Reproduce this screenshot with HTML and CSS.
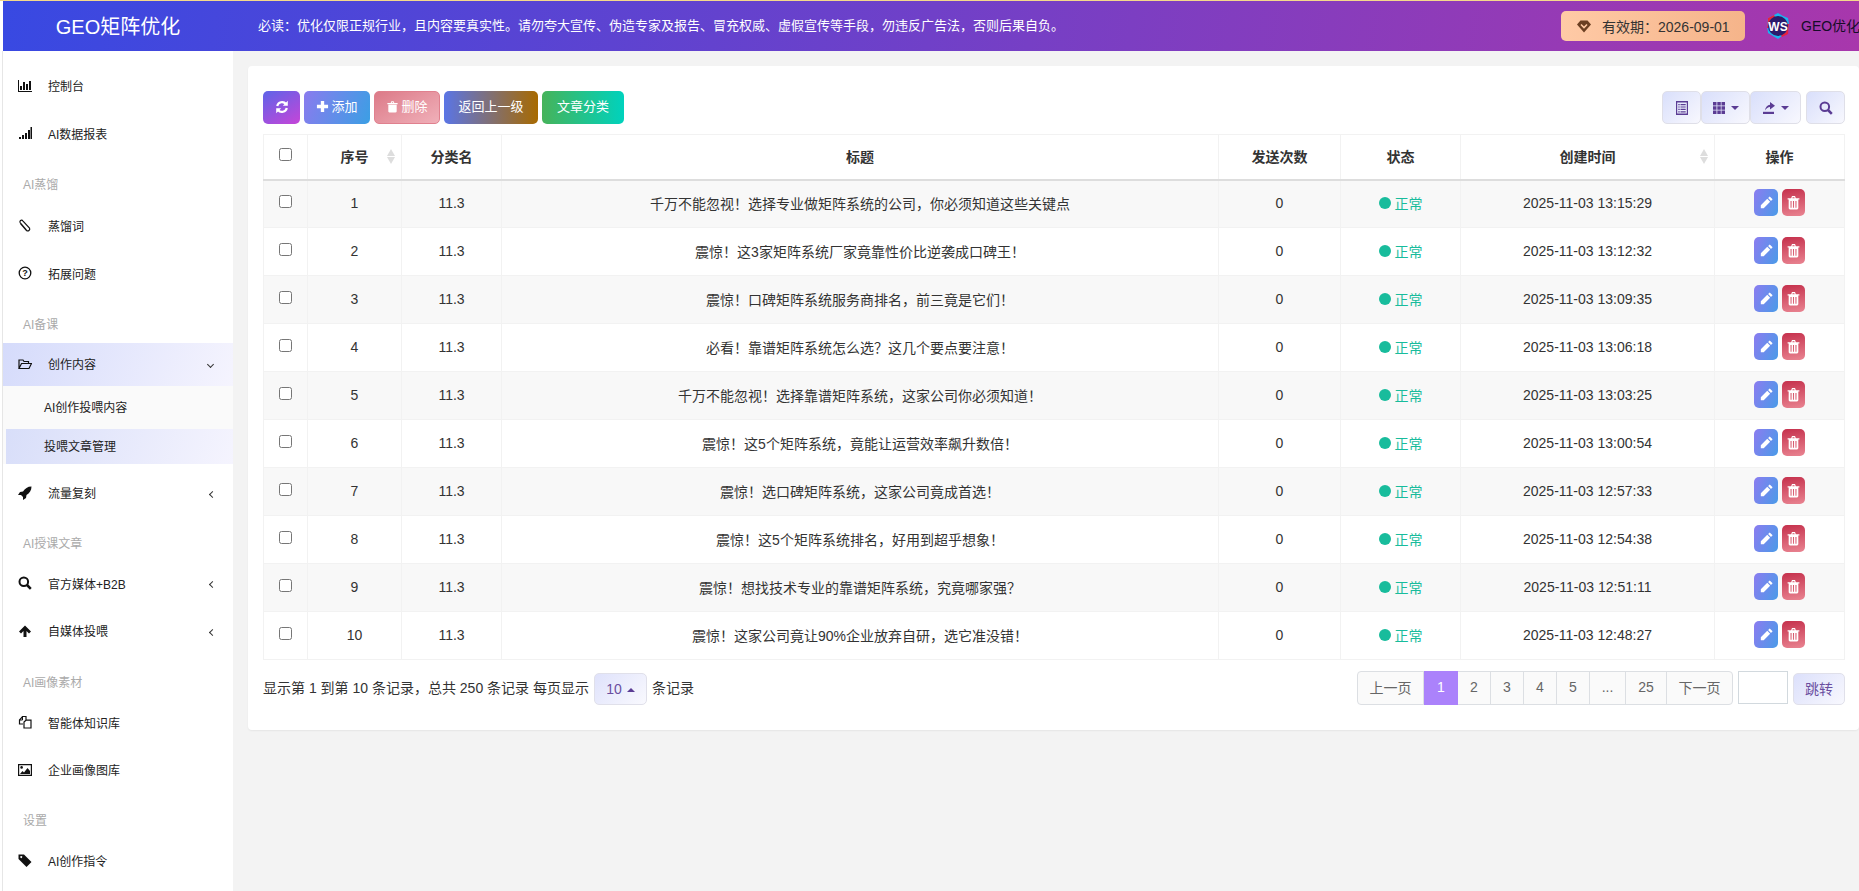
FILE: index.html
```html
<!DOCTYPE html>
<html lang="zh-CN">
<head>
  <meta charset="UTF-8">
  <title>GEO矩阵优化</title>
  <link rel="stylesheet" href="styles.css">
</head>
<body>
  <!-- icon sprite -->
  <svg class="sprite" aria-hidden="true">
    <symbol id="i-chart" viewBox="0 0 14 14"><path d="M0 1h1v11h13v1H0z"/><path d="M2 7h2v4H2zM5 3h2v8H5zM8 5h2v6H8zM11 2h2v9h-2z"/></symbol>
    <symbol id="i-signal" viewBox="0 0 14 14"><path d="M1 11h2v2H1zM4 9h2v4H4zM7 7h2v6H7zM10 4h2v9h-2zM12.5 1H14v12h-1.5z"/></symbol>
    <symbol id="i-clip" viewBox="0 0 14 14"><path fill="none" stroke="currentColor" stroke-width="1.2" d="M2.5 4.5l6 7a2 2 0 0 0 3-2.5L4.800 1.800a1.600 1.600 0 0 0-2.500 2l6 7"/></symbol>
    <symbol id="i-question" viewBox="0 0 14 14"><circle cx="7" cy="7" r="5.8" fill="none" stroke="currentColor" stroke-width="1.3"/><text x="7" y="10.3" text-anchor="middle" class="sprite-q">?</text></symbol>
    <symbol id="i-folder" viewBox="0 0 14 14"><path fill="none" stroke="currentColor" stroke-width="1.2" d="M1 11.500V3h4l1 1.500h4.500v2M1 11.500l2.500-5h10l-2.500 5z"/></symbol>
    <symbol id="i-rocket" viewBox="0 0 14 14"><path d="M13.500.5c-4 0-6.500 2-8.500 5L2 6 0 9h3l2 2v3l3-2 .5-3c3-2 5-4.500 5-8.500z"/></symbol>
    <symbol id="i-search" viewBox="0 0 14 14"><circle cx="5.8" cy="5.8" r="4.3" fill="none" stroke="currentColor" stroke-width="2"/><path d="M9 9l3.800 3.800" fill="none" stroke="currentColor" stroke-width="2.5"/></symbol>
    <symbol id="i-up" viewBox="0 0 14 14"><path d="M7 1.500l6 6-2 2L8.500 7v6h-3V7L3 9.500l-2-2z"/></symbol>
    <symbol id="i-files" viewBox="0 0 14 14"><path fill="none" stroke="currentColor" stroke-width="1.2" d="M5 9H1.500V5l3-3.500H8V5M8 5.200h5V13H6V7z"/><path d="M4.500 1.500V5h-3" fill="none" stroke="currentColor"/></symbol>
    <symbol id="i-picture" viewBox="0 0 14 14"><path fill="none" stroke="currentColor" stroke-width="1.2" d="M.6 1.600h12.800v10.800H.6z"/><circle cx="3.6" cy="4.4" r="1.3"/><path d="M2 11l2.500-3 1.500 1.500L9.500 5 12 8v3z"/></symbol>
    <symbol id="i-tag" viewBox="0 0 14 14"><path fill-rule="evenodd" d="M.5 1.500H6L13.500 9l-5 5-8-8zM3.200 3a1 1 0 1 0 .1 0z"/></symbol>
    <symbol id="i-refresh" viewBox="0 0 14 14"><path fill="none" stroke="currentColor" stroke-width="2.2" d="M2.200 6A5 5 0 0 1 11 4M11.800 8A5 5 0 0 1 3 10"/><path d="M12.800.8v5h-5zM1.200 13.200v-5h5z"/></symbol>
    <symbol id="i-plus" viewBox="0 0 14 14"><path d="M5.200 1h3.600v4.200H13v3.600H8.800V13H5.200V8.800H1V5.200h4.200z"/></symbol>
    <symbol id="i-trash" viewBox="0 0 14 14"><path d="M1.500 3.200h11v1.300h-11zM5 3.200l.8-1.900h2.400l.8 1.900H7.900l-.4-.8h-1l-.4.800zM2.500 5h9v7.200c0 .8-.5 1.300-1.200 1.300H3.700c-.7 0-1.200-.5-1.200-1.300z"/></symbol>
    <symbol id="i-trash-line" viewBox="0 0 14 14"><path fill-rule="evenodd" d="M1.500 3h11v1.300h-1v7.900c0 .8-.5 1.300-1.200 1.300H3.700c-.7 0-1.200-.5-1.200-1.300V4.300h-1zM4.800 3l.8-2h2.800l.8 2H8l-.2-.9H6.200L6 3zM4.200 5.500V12h1V5.500zM6.500 5.500V12h1V5.500zM8.800 5.500V12h1V5.500z"/></symbol>
    <symbol id="i-pencil" viewBox="0 0 14 14"><path d="M10 1.300L12.700 4l-1.500 1.500-2.700-2.700zM7.700 3.600l2.700 2.700-6 6H1.700V9.600z"/></symbol>
    <symbol id="i-list" viewBox="0 0 14 14"><path fill-rule="evenodd" d="M1 0h12v14H1zM2.200 1.500v11h9.600v-11z"/><path d="M3.300 3h1.400v1.200H3.300zM5.500 3h5.200v1.200H5.500zM3.300 5.400h1.400v1.200H3.300zM5.500 5.400h5.200v1.200H5.500zM3.300 7.800h1.400V9H3.300zM5.500 7.800h5.200V9H5.500zM3.300 10.200h1.400v1.200H3.300zM5.500 10.200h5.200v1.200H5.500z"/></symbol>
    <symbol id="i-grid" viewBox="0 0 14 14"><path d="M1 1h3.500v3.500H1zM5.300 1h3.500v3.500H5.300zM9.500 1H13v3.500H9.500zM1 5.300h3.500v3.500H1zM5.300 5.300h3.500v3.500H5.300zM9.500 5.300H13v3.500H9.500zM1 9.500h3.500V13H1zM5.300 9.500h3.500V13H5.300zM9.500 9.500H13V13H9.500z"/></symbol>
    <symbol id="i-export" viewBox="0 0 14 14"><path d="M1 10.800h11V13H1z"/><path d="M3 9.500C3.300 6 5.500 4 8 3.700V1l5 3.800-5 3.700V6C6 6 4.500 7.500 3 9.500z"/></symbol>
  </svg>

  <header class="header">
    <div class="logo">GEO矩阵优化</div>
    <div class="notice">必读：优化仅限正规行业，且内容要真实性。请勿夸大宣传、伪造专家及报告、冒充权威、虚假宣传等手段，勿违反广告法，否则后果自负。</div>
    <div class="expire">
      <svg class="expire-icon" viewBox="0 0 14 14"><path d="M3.500 1.500h7L14 5.500l-7 8-7-8z" fill="#6b3f22"/><path d="M4 5.500l3 3 3-3" fill="none" stroke="#ffc9a2" stroke-width="1.6"/></svg>
      <span>有效期：2026-09-01</span>
    </div>
    <svg class="avatar" viewBox="0 0 24 26">
      <path d="M12 0l5 3 5 2 1 6-1 8-6 4-4 3-5-3-5-3-1-8 1-7z" fill="#19b5f0"/>
      <path d="M2 5l6-3 1 2-5 3v8H1zM22 21l-6 3-1-2 5-3v-8h3z" fill="#e8213f"/>
      <circle cx="12" cy="13" r="10" fill="#2c1a6b"/>
      <text x="12" y="17.5" text-anchor="middle" class="avatar-text">WS</text>
    </svg>
    <div class="username">GEO优化</div>
  </header>

  <div class="layout">
    <nav class="sidebar">
      <a class="nav-item"><svg class="nav-icon"><use href="#i-chart"/></svg>控制台</a>
      <a class="nav-item"><svg class="nav-icon"><use href="#i-signal"/></svg>AI数据报表</a>
      <div class="nav-title">AI蒸馏</div>
      <a class="nav-item"><svg class="nav-icon"><use href="#i-clip"/></svg>蒸馏词</a>
      <a class="nav-item"><svg class="nav-icon"><use href="#i-question"/></svg>拓展问题</a>
      <div class="nav-title">AI备课</div>
      <a class="nav-item nav-open"><svg class="nav-icon"><use href="#i-folder"/></svg>创作内容<span class="chevron chevron-down"></span></a>
      <div class="subnav">
        <a class="sub-item">AI创作投喂内容</a>
        <a class="sub-item sub-active">投喂文章管理</a>
      </div>
      <a class="nav-item"><svg class="nav-icon"><use href="#i-rocket"/></svg>流量复刻<span class="chevron"></span></a>
      <div class="nav-title nav-title-tight">AI授课文章</div>
      <a class="nav-item"><svg class="nav-icon"><use href="#i-search"/></svg>官方媒体+B2B<span class="chevron"></span></a>
      <a class="nav-item"><svg class="nav-icon"><use href="#i-up"/></svg>自媒体投喂<span class="chevron"></span></a>
      <div class="nav-title nav-title-mid">AI画像素材</div>
      <a class="nav-item"><svg class="nav-icon"><use href="#i-files"/></svg>智能体知识库</a>
      <a class="nav-item"><svg class="nav-icon"><use href="#i-picture"/></svg>企业画像图库</a>
      <div class="nav-title nav-title-tight">设置</div>
      <a class="nav-item"><svg class="nav-icon"><use href="#i-tag"/></svg>AI创作指令</a>
    </nav>

    <main class="content">
      <section class="card">
        <div class="toolbar">
          <button class="btn btn-refresh"><svg class="btn-icon"><use href="#i-refresh"/></svg></button>
          <button class="btn btn-add"><svg class="btn-icon"><use href="#i-plus"/></svg>添加</button>
          <button class="btn btn-del"><svg class="btn-icon"><use href="#i-trash"/></svg>删除</button>
          <button class="btn btn-back">返回上一级</button>
          <button class="btn btn-cate">文章分类</button>
          <div class="tools">
            <button class="tool tool-list"><svg class="tool-icon"><use href="#i-list"/></svg></button>
            <button class="tool tool-grid"><svg class="tool-icon"><use href="#i-grid"/></svg><span class="caret"></span></button>
            <button class="tool tool-export"><svg class="tool-icon"><use href="#i-export"/></svg><span class="caret"></span></button>
            <button class="tool tool-search"><svg class="tool-icon"><use href="#i-search"/></svg></button>
          </div>
        </div>

        <table class="grid">
          <thead>
            <tr>
              <th><input type="checkbox"></th>
              <th class="sortable">序号<span class="sort"></span></th>
              <th>分类名</th>
              <th>标题</th>
              <th>发送次数</th>
              <th>状态</th>
              <th class="sortable">创建时间<span class="sort"></span></th>
              <th>操作</th>
            </tr>
          </thead>
          <tbody>
            <tr>
              <td><input type="checkbox"></td><td>1</td><td>11.3</td>
              <td>千万不能忽视！选择专业做矩阵系统的公司，你必须知道这些关键点</td>
              <td>0</td><td><span class="status"><i class="dot"></i>正常</span></td><td>2025-11-03 13:15:29</td>
              <td><div class="ops"><a class="op op-edit"><svg><use href="#i-pencil"/></svg></a><a class="op op-del"><svg><use href="#i-trash-line"/></svg></a></div></td>
            </tr>
            <tr>
              <td><input type="checkbox"></td><td>2</td><td>11.3</td>
              <td>震惊！这3家矩阵系统厂家竟靠性价比逆袭成口碑王！</td>
              <td>0</td><td><span class="status"><i class="dot"></i>正常</span></td><td>2025-11-03 13:12:32</td>
              <td><div class="ops"><a class="op op-edit"><svg><use href="#i-pencil"/></svg></a><a class="op op-del"><svg><use href="#i-trash-line"/></svg></a></div></td>
            </tr>
            <tr>
              <td><input type="checkbox"></td><td>3</td><td>11.3</td>
              <td>震惊！口碑矩阵系统服务商排名，前三竟是它们！</td>
              <td>0</td><td><span class="status"><i class="dot"></i>正常</span></td><td>2025-11-03 13:09:35</td>
              <td><div class="ops"><a class="op op-edit"><svg><use href="#i-pencil"/></svg></a><a class="op op-del"><svg><use href="#i-trash-line"/></svg></a></div></td>
            </tr>
            <tr>
              <td><input type="checkbox"></td><td>4</td><td>11.3</td>
              <td>必看！靠谱矩阵系统怎么选？这几个要点要注意！</td>
              <td>0</td><td><span class="status"><i class="dot"></i>正常</span></td><td>2025-11-03 13:06:18</td>
              <td><div class="ops"><a class="op op-edit"><svg><use href="#i-pencil"/></svg></a><a class="op op-del"><svg><use href="#i-trash-line"/></svg></a></div></td>
            </tr>
            <tr>
              <td><input type="checkbox"></td><td>5</td><td>11.3</td>
              <td>千万不能忽视！选择靠谱矩阵系统，这家公司你必须知道！</td>
              <td>0</td><td><span class="status"><i class="dot"></i>正常</span></td><td>2025-11-03 13:03:25</td>
              <td><div class="ops"><a class="op op-edit"><svg><use href="#i-pencil"/></svg></a><a class="op op-del"><svg><use href="#i-trash-line"/></svg></a></div></td>
            </tr>
            <tr>
              <td><input type="checkbox"></td><td>6</td><td>11.3</td>
              <td>震惊！这5个矩阵系统，竟能让运营效率飙升数倍！</td>
              <td>0</td><td><span class="status"><i class="dot"></i>正常</span></td><td>2025-11-03 13:00:54</td>
              <td><div class="ops"><a class="op op-edit"><svg><use href="#i-pencil"/></svg></a><a class="op op-del"><svg><use href="#i-trash-line"/></svg></a></div></td>
            </tr>
            <tr>
              <td><input type="checkbox"></td><td>7</td><td>11.3</td>
              <td>震惊！选口碑矩阵系统，这家公司竟成首选！</td>
              <td>0</td><td><span class="status"><i class="dot"></i>正常</span></td><td>2025-11-03 12:57:33</td>
              <td><div class="ops"><a class="op op-edit"><svg><use href="#i-pencil"/></svg></a><a class="op op-del"><svg><use href="#i-trash-line"/></svg></a></div></td>
            </tr>
            <tr>
              <td><input type="checkbox"></td><td>8</td><td>11.3</td>
              <td>震惊！这5个矩阵系统排名，好用到超乎想象！</td>
              <td>0</td><td><span class="status"><i class="dot"></i>正常</span></td><td>2025-11-03 12:54:38</td>
              <td><div class="ops"><a class="op op-edit"><svg><use href="#i-pencil"/></svg></a><a class="op op-del"><svg><use href="#i-trash-line"/></svg></a></div></td>
            </tr>
            <tr>
              <td><input type="checkbox"></td><td>9</td><td>11.3</td>
              <td>震惊！想找技术专业的靠谱矩阵系统，究竟哪家强？</td>
              <td>0</td><td><span class="status"><i class="dot"></i>正常</span></td><td>2025-11-03 12:51:11</td>
              <td><div class="ops"><a class="op op-edit"><svg><use href="#i-pencil"/></svg></a><a class="op op-del"><svg><use href="#i-trash-line"/></svg></a></div></td>
            </tr>
            <tr>
              <td><input type="checkbox"></td><td>10</td><td>11.3</td>
              <td>震惊！这家公司竟让90%企业放弃自研，选它准没错！</td>
              <td>0</td><td><span class="status"><i class="dot"></i>正常</span></td><td>2025-11-03 12:48:27</td>
              <td><div class="ops"><a class="op op-edit"><svg><use href="#i-pencil"/></svg></a><a class="op op-del"><svg><use href="#i-trash-line"/></svg></a></div></td>
            </tr>
          </tbody>
        </table>

        <div class="footer">
          <div class="summary">
            <span>显示第 1 到第 10 条记录，总共 250 条记录 每页显示</span>
            <button class="page-size">10<span class="caret caret-up"></span></button>
            <span>条记录</span>
          </div>
          <div class="paging">
            <ul class="pages">
              <li class="page-prev">上一页</li>
              <li class="page-1 on">1</li>
              <li class="page-n">2</li>
              <li class="page-n">3</li>
              <li class="page-n">4</li>
              <li class="page-n">5</li>
              <li class="page-dots">...</li>
              <li class="page-last">25</li>
              <li class="page-next">下一页</li>
            </ul>
            <input class="jump-input" type="text">
            <button class="jump-btn">跳转</button>
          </div>
        </div>
      </section>
    </main>
  </div>
</body>
</html>
```

FILE: styles.css
```css
* {
  box-sizing: border-box;
}

html, body {
  height: 100%;
}

body {
  margin: 0;
  overflow: hidden;
  background: #fff;
  border-top: 1px solid #f4d98c;
  font-family: "Liberation Sans", "Noto Sans CJK SC", sans-serif;
  font-size: 14px;
  color: #333;
}

.sprite {
  display: none;
}

.sprite-q {
  font-family: "Liberation Sans", sans-serif;
  font-size: 9px;
  font-weight: bold;
  fill: currentColor;
}

/* header */
.header {
  display: flex;
  align-items: center;
  height: 50px;
  margin-left: 3px;
  overflow: hidden;
  background: linear-gradient(100deg, #3849e2 0%, #7040c8 50%, #a837ac 100%);
}

.logo {
  flex: none;
  width: 230px;
  padding-bottom: 2px;
  font-size: 20px;
  color: #fff;
  text-align: center;
}

.notice {
  flex: none;
  width: 1328px;
  padding: 0 0 4px 25px;
  font-size: 13px;
  color: #fff;
}

.expire {
  flex: none;
  display: flex;
  align-items: center;
  width: 184px;
  height: 30px;
  padding: 0 0 1px 16px;
  border-radius: 5px;
  background: linear-gradient(90deg, #ffcaa6, #f5b48a);
  color: #333;
}

.expire-icon {
  width: 14px;
  height: 14px;
  margin: 1px 11px 0 0;
}

.avatar {
  flex: none;
  width: 24px;
  height: 26px;
  margin-left: 21px;
}

.avatar-text {
  font-family: "Liberation Sans", sans-serif;
  font-size: 12px;
  font-weight: bold;
  fill: #fff;
}

.username {
  flex: none;
  margin-left: 11px;
  padding-bottom: 2px;
  color: #160c28;
  white-space: nowrap;
}

/* layout */
.layout {
  display: flex;
  height: calc(100% - 50px);
  padding-left: 2px;
}

.sidebar {
  flex: none;
  width: 231px;
  padding-top: 12px;
  background: #fff;
  border-left: 1px solid #e6e6e6;
  font-size: 12px;
  color: #222;
}

.nav-item {
  display: flex;
  align-items: center;
  height: 47.5px;
  padding: 0 0 2px 15px;
  position: relative;
}

.nav-icon {
  width: 14px;
  height: 14px;
  margin-right: 16px;
  fill: #111;
  color: #111;
}

.nav-title {
  height: 45px;
  padding: 17px 0 0 20px;
  line-height: 20px;
  color: #aaa;
}

.nav-title-tight {
  height: 43px;
  padding-top: 16px;
}

.nav-title-mid {
  height: 44px;
  padding-top: 17px;
}

.nav-open {
  height: 43px;
  background: linear-gradient(110deg, #d5dbfb, #f5f4fe);
}

.chevron {
  position: absolute;
  left: 207px;
  top: 50%;
  width: 5px;
  height: 5px;
  margin-top: -2px;
  border-left: 1.3px solid #333;
  border-bottom: 1.3px solid #333;
  transform: rotate(45deg);
}

.chevron-down {
  left: 205px;
  margin-top: -3px;
  transform: rotate(-45deg);
}

.subnav {
  height: 78px;
  margin-bottom: 6px;
  background: #fafafa;
}

.sub-item {
  display: flex;
  align-items: center;
  height: 43px;
  padding: 0 0 2px 41px;
}

.sub-active {
  height: 35px;
  margin-left: 3px;
  padding-left: 38px;
  background: linear-gradient(110deg, #d8def9, #f5f4fe);
}

/* content */
.content {
  flex: 1;
  min-width: 0;
  padding: 15px 0 0 15px;
  background: #f3f3f3;
}

.card {
  padding: 25px 14px 25px 15px;
  background: #fff;
  border-radius: 4px;
  box-shadow: 0 1px 2px rgba(0, 0, 0, 0.06);
}

.toolbar {
  display: flex;
  gap: 4px;
  height: 33px;
  margin-bottom: 10px;
}

.btn {
  height: 33px;
  padding: 0 0 4px;
  border: 0;
  border-radius: 5px;
  font: 13px "Liberation Sans", "Noto Sans CJK SC", sans-serif;
  color: #fff;
}

.btn-icon {
  width: 13px;
  height: 13px;
  margin-right: 2px;
  fill: #fff;
  color: #fff;
  vertical-align: -2px;
}

.btn-refresh {
  width: 37px;
  padding: 0;
  background: linear-gradient(150deg, #5e64e8, #c645d8);
}

.btn-refresh .btn-icon {
  width: 14px;
  height: 14px;
  margin: 0;
}

.btn-add {
  width: 66px;
  background: linear-gradient(110deg, #8a7bee, #3b9fe4);
}

.btn-del {
  width: 66px;
  border: 1px solid #e0808e;
  background: linear-gradient(150deg, #dc7a88, #f0b0b9);
}

.btn-back {
  width: 94px;
  background: linear-gradient(90deg, #5a75e6, #a86a00);
}

.btn-cate {
  width: 82px;
  background: linear-gradient(90deg, #46b35a, #00d2bd);
}

.tools {
  display: flex;
  margin-left: auto;
}

.tool {
  display: flex;
  align-items: center;
  justify-content: center;
  height: 33px;
  padding: 0;
  border: 1px solid #dfdfe8;
  border-radius: 5px;
  background: linear-gradient(135deg, #d9dffb, #f8f8fe);
}

.tool-icon {
  width: 14px;
  height: 14px;
  fill: #5b3c94;
  color: #5b3c94;
}

.tool-list {
  width: 39px;
}

.tool-grid {
  width: 49px;
}

.tool-export {
  width: 51px;
}

.tool-search {
  width: 39px;
  margin-left: 5px;
}

.caret {
  display: inline-block;
  margin-left: 5px;
  border-top: 4px solid #5b3c94;
  border-left: 4px solid transparent;
  border-right: 4px solid transparent;
}

.caret-up {
  border-top: 0;
  border-bottom: 4px solid #5b3c94;
  vertical-align: 2px;
}

/* table */
.grid {
  width: 100%;
  table-layout: fixed;
  border-collapse: collapse;
  border: 1px solid #f2f2f2;
}

.grid th,
.grid td {
  padding: 0 0 2px;
  border: 1px solid #f2f2f2;
  text-align: center;
  color: #333;
}

.grid th {
  height: 45px;
  border-bottom: 2px solid #ddd;
  position: relative;
}

.grid td {
  height: 48px;
}

.grid th:nth-child(1) { width: 44px; }
.grid th:nth-child(2) { width: 94px; }
.grid th:nth-child(3) { width: 100px; }
.grid th:nth-child(5) { width: 122px; }
.grid th:nth-child(6) { width: 120px; }
.grid th:nth-child(7) { width: 254px; }
.grid th:nth-child(8) { width: 130px; }

.grid tbody tr:nth-child(odd) td {
  background: #f8f8f8;
}

.grid input[type="checkbox"] {
  margin: 0 0 3px;
  vertical-align: middle;
}

.sort {
  position: absolute;
  top: 14px;
  right: 6px;
  width: 8px;
  height: 16px;
}

.sort::before,
.sort::after {
  content: "";
  display: block;
  border-left: 4px solid transparent;
  border-right: 4px solid transparent;
}

.sort::before {
  border-bottom: 7px solid #ddd;
  margin-bottom: 1px;
}

.sort::after {
  border-top: 7px solid #ddd;
}

.status {
  display: inline-flex;
  align-items: center;
  color: #18bc9c;
}

.dot {
  width: 12px;
  height: 12px;
  margin: 1px 4px 0 0;
  border-radius: 50%;
  background: #18bc9c;
}

.ops {
  display: flex;
  justify-content: center;
  gap: 4px;
}

.op {
  display: flex;
  align-items: center;
  justify-content: center;
  width: 24px;
  height: 27px;
  border-radius: 5px;
}

.op svg {
  width: 15px;
  height: 15px;
  fill: #fff;
}

.op-edit {
  background: linear-gradient(110deg, #8b7cf0, #4a9be8);
}

.op-del {
  width: 23px;
  background: linear-gradient(170deg, #c5304c, #e98491);
}

/* footer */
.footer {
  display: flex;
  justify-content: space-between;
  margin-top: 11px;
}

.summary {
  display: flex;
  align-items: center;
  gap: 5px;
  height: 34px;
  padding-bottom: 2px;
}

.page-size {
  width: 53px;
  height: 32px;
  margin-top: 4px;
  padding: 0;
  border: 1px solid #e0e0ea;
  border-radius: 5px;
  background: linear-gradient(135deg, #dfe2fb, #f9f9fe);
  font: 14px "Liberation Sans", sans-serif;
  color: #6a4ea0;
}

.paging {
  display: flex;
  align-items: flex-start;
}

.pages {
  display: flex;
  height: 34px;
  margin: 0;
  padding: 0;
  list-style: none;
  border: 1px solid #dcdfe3;
  border-radius: 4px;
  background: #fafafa;
  color: #666;
}

.pages li {
  display: flex;
  align-items: center;
  justify-content: center;
  padding-bottom: 2px;
  border-right: 1px solid #dcdfe3;
}

.pages li:last-child {
  border-right: 0;
}

.pages .on {
  margin: -1px 0;
  background: #ab82fb;
  color: #fff;
  border-right: 0;
}

.page-prev { width: 66px; }
.page-1 { width: 34px; }
.page-n { width: 33px; }
.page-dots { width: 36px; }
.page-last { width: 41px; }
.page-next { width: 65px; }

.jump-input {
  width: 50px;
  height: 33px;
  margin-left: 5px;
  padding: 0;
  border: 1px solid #d2d9de;
  background: #fff;
}

.jump-btn {
  width: 52px;
  height: 32px;
  margin: 2px 0 0 5px;
  padding: 0 0 2px;
  border: 1px solid #e0e0ea;
  border-radius: 5px;
  background: linear-gradient(135deg, #dce0fb, #f8f8fe);
  font: 14px "Liberation Sans", "Noto Sans CJK SC", sans-serif;
  color: #6a4ea0;
}
```
